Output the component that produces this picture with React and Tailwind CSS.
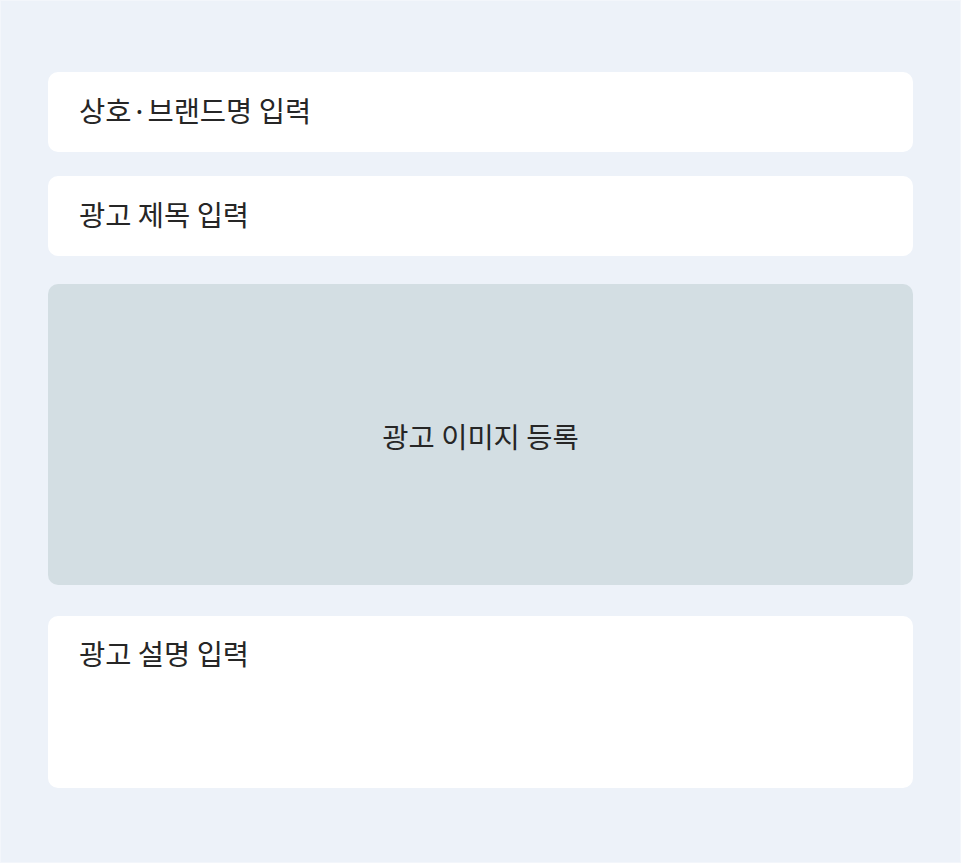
export default function App() {
  return (
    <div className="w-[961px] h-[863px] bg-[#edf2f9] border border-[#f3f6fb] box-border px-[47px] pt-[71px] flex flex-col text-[#262626] text-[28.5px] [font-family:'Noto_Sans_CJK_KR','Noto_Sans',sans-serif]">
      {/* 상호 */}
      <div className="h-[80px] bg-white rounded-[10px] flex items-center px-[31px] pb-[4px]">
        상호·브랜드명 입력
      </div>

      {/* 제목 */}
      <div className="mt-[24px] h-[80px] bg-white rounded-[10px] flex items-center px-[31px] pb-[4px]">
        광고 제목 입력
      </div>

      {/* 이미지 */}
      <div className="mt-[28px] h-[301px] bg-[#d3dee3] rounded-[10px] flex items-center justify-center pt-[3px]">
        광고 이미지 등록
      </div>

      {/* 설명 */}
      <div className="mt-[31px] h-[172px] bg-white rounded-[10px] px-[31px] pt-[18px] leading-[38px]">
        광고 설명 입력
      </div>
    </div>
  );
}
